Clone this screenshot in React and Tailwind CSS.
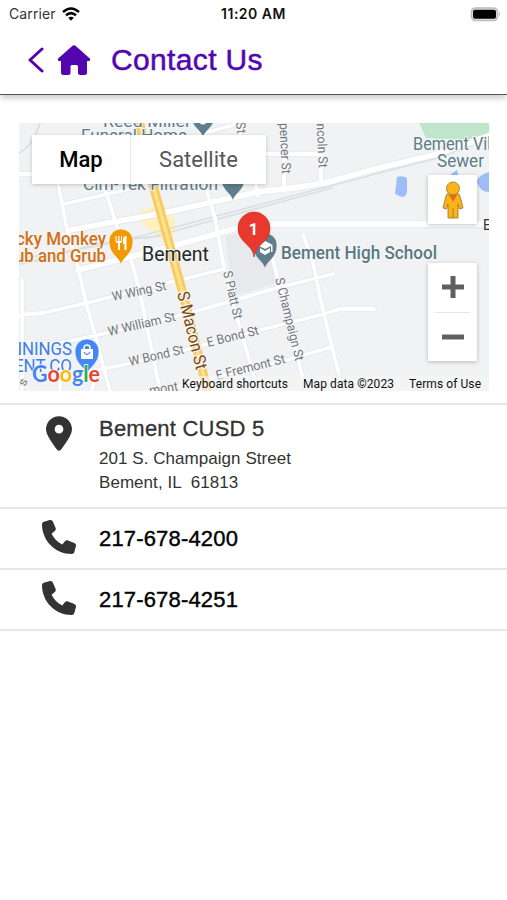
import React from 'react';

const minorRoads = [
  'M19 174H36', 'M58 183L66 225L77 263L86 303L95 335L110 391',
  'M64 204L143 186L210 168', 'M104 187L107 195L117 227L132 263L140 293L160 391',
  'M203 178L208 195L215 218L223 262L232 300L256 384', 'M265 224L273 260L306 391',
  'M303 235L313 262L320 297L332 347L339 374', 'M19 315L43 313L87 303L167 283L224 269',
  'M55 344L107 333L193 312L277 288L333 274', 'M93 371L127 364L185 350L260 330L320 315L340 309H374',
  'M170 388L287 360L331 347', 'M22 280V391', 'M60 363V391', 'M95 370L92 391',
  'M260 154H322', 'M284 123V188', 'M321 123V182', 'M205 133L240 123', 'M255 180L258 196', 'M240 123V140', 'M19 343L54 344',
];
const majorRoads = [
  'M70 230L163 213L208 203L257 192L300 187L325 183L371 170L437 154L489 136',
  'M78 270L110 262L173 246L223 232Q245 225 270 224H489',
];

function Label({ x, y, w, size = 13, fill = '#73777b', rotate = 0, weight = 400, halo = 2, children }) {
  return (
    <text x={x} y={y} textLength={w} lengthAdjust="spacingAndGlyphs" fontSize={size} fontWeight={weight} fill={fill}
      stroke="#f4f6f7" strokeWidth={halo} strokeLinejoin="round" paintOrder="stroke" transform={`rotate(${rotate} ${x} ${y})`}>
      {children}
    </text>
  );
}

function Pin({ x, y, s = 1, fill, children }) {
  return (
    <g transform={`translate(${x} ${y}) scale(${s})`}>
      <path d="M0 19C-2 10-12 9-12-5A12 12 0 0 1 12-5C12 9 2 10 0 19Z" fill={fill} stroke="#fff" strokeWidth=".6" />
      {children}
    </g>
  );
}

function MapDrawing() {
  return (
    <svg viewBox="19 123 470 268" className="block h-full w-full font-[Roboto,sans-serif]" role="img" aria-label="Map of Bement">
      <rect x="19" y="123" width="470" height="268" fill="#f0f2f4" />
      <path d="M225 236L258 230L272 256L275 284L233 296Z" fill="#e7e9ed" />
      <path d="M419 123H489V136L466 140L426 138Z" fill="#bfe5ca" />
      <g fill="#9cbdf8">
        <path d="M397 177Q402 175 407 178V192Q406 197 402 197L395 194Z" />
        <path d="M451 174L457 170L459 178H450Z" />
        <path d="M477 182Q478 175 489 172V192Q480 192 477 182Z" />
      </g>
      <path d="M140 211L158 205L170 209L178 231L164 240L148 228L137 220Z" fill="#fff0bd" />
      <g fill="none" stroke="#dcdee1" strokeWidth="1.8">
        <path d="M19 153Q32 147 40 123M19 258Q80 252 160 231L330 186L437 158L489 139M145 239L332 188" />
        <path d="M19 264L40 260Q100 240 160 236" />
      </g>
      <g fill="none" strokeLinejoin="round" strokeLinecap="round">
        {minorRoads.map((d) => <path key={d} d={d} stroke="#e3e5e8" strokeWidth="5" />)}
        {majorRoads.map((d) => <path key={d} d={d} stroke="#e3e5e8" strokeWidth="7" />)}
        {minorRoads.map((d) => <path key={d} d={d} stroke="#fff" strokeWidth="3.8" />)}
        {majorRoads.map((d) => <path key={d} d={d} stroke="#fff" strokeWidth="5.8" />)}
        <path d="M139 120L153 185L171 250L182 290L208 393" stroke="#f8cb62" strokeWidth="9" />
        <path d="M139 120L153 185L171 250L182 290L208 393" stroke="#ffe18d" strokeWidth="3.2" />
      </g>

      <Label x={103} y={127} w={88} size={17} fill="#5f7d86">Reed Miller</Label>
      <Label x={81} y={141} w={106} size={17} fill="#5f7d86">Funeral Home</Label>
      <Label x={83} y={190} w={135} size={17} fill="#5f7d86">Cim-Tek Filtration</Label>
      <Pin x={203} y={119} fill="#607d8b"><circle cy="2" r="3.5" fill="#fff" /></Pin>
      <Pin x={233} y={182} fill="#607d8b" />

      <Label x={236} y={122} w={12} rotate={85}>St</Label>
      <Label x={279} y={116} w={58} rotate={87}>Spencer St</Label>
      <Label x={316} y={114} w={54} rotate={87}>Lincoln St</Label>
      <Label x={413} y={150} w={91} size={18} fill="#5f7d86">Bement Villa</Label>
      <Label x={437} y={167} w={47} size={18} fill="#5f7d86">Sewer</Label>
      <text x="483" y="230" fontSize="14" fill="#333">E</text>

      <Label x={113} y={301} w={55} rotate={-12}>W Wing St</Label>
      <Label x={109} y={336} w={69} rotate={-13}>W William St</Label>
      <Label x={130} y={366} w={56} rotate={-13}>W Bond St</Label>
      <Label x={208} y={347} w={53} rotate={-14}>E Bond St</Label>
      <Label x={217} y={380} w={71} rotate={-14}>E Fremont St</Label>
      <Label x={150} y={395} w={29} rotate={-9}>mont</Label>
      <Label x={223} y={272} w={49} rotate={77}>S Piatt St</Label>
      <Label x={275} y={279} w={85} rotate={76}>S Champaign St</Label>
      <Label x={25} y={387} w={7} size={12} rotate={-65}>s</Label>
      <Label x={177} y={293} w={80} size={17} rotate={76} weight={400} fill="#7b4a12" halo={2.6}>S Macon St</Label>

      <Label x={16} y={245} w={90} size={18} weight={500} fill="#d27015">cky Monkey</Label>
      <Label x={15} y={262} w={91} size={18} weight={500} fill="#d27015">ub and Grub</Label>
      <Pin x={121} y={246} fill="#f29900">
        <path d="M-5.500-10V-5Q-5.500-3-3-3V4H-1V-3Q1-3 1-5V-10H0V-5H-1.500V-10H-2.700V-5H-4.300V-10ZM2-6Q2-10 5.500-10V4H3.500V-2H2Z" fill="#fff" />
      </Pin>
      <Label x={142} y={261} w={67} size={20} fill="#26282a">Bement</Label>
      <Pin x={265} y={250} fill="#607d8b">
        <path d="M-8-5L0-9L8-5L0-1ZM-5-2L0 1L5-2V2L0 5L-5 2ZM6-4H7.500V2H6Z" fill="#fff" />
      </Pin>
      <Label x={281} y={258.500} w={156} size={18} weight={500} fill="#5a7780">Bement High School</Label>
      <path d="M254 257C253 244 238 243 238 228A16 16 0 0 1 270 228C270 243 255 244 254 257Z" fill="#e9392f" stroke="#c9362e" strokeWidth=".8" />
      <text x="253.500" y="234.500" textAnchor="middle" fontSize="16.500" fontWeight="700" fill="#fff">1</text>

      <Label x={10} y={355} w={62} size={18} fill="#3c7de6">NNINGS</Label>
      <Label x={14} y={372} w={58} size={18} fill="#3c7de6">ENT CO</Label>
      <Pin x={87} y={356} fill="#4387f5">
        <path d="M-6-7H6V3H-6Z" fill="#fff" /><path d="M-3-7V-8A3 3 0 0 1 3-8V-7" fill="none" stroke="#fff" strokeWidth="1.500" />
        <path d="M-3-4Q0 1 3-4" fill="none" stroke="#4387f5" strokeWidth="1.300" />
      </Pin>
      <text x="32" y="382" textLength="68" lengthAdjust="spacingAndGlyphs" fontSize="23" fontWeight="700" paintOrder="stroke" stroke="#fff" strokeWidth="1.500" className="font-[Lato,sans-serif]">
        <tspan fill="#4285f4">G</tspan><tspan fill="#ea4335">o</tspan><tspan fill="#fbbc05">o</tspan><tspan fill="#4285f4">g</tspan><tspan fill="#34a853">l</tspan><tspan fill="#ea4335">e</tspan>
      </text>
      <rect x="179" y="376" width="310" height="15" fill="#f5f5f5" fillOpacity=".65" />
      <g fontSize="12" fill="#111">
        <text x="182" y="388" textLength="106">Keyboard shortcuts</text>
        <text x="303" y="388" textLength="91">Map data ©2023</text>
        <text x="409" y="388" textLength="72">Terms of Use</text>
      </g>
    </svg>
  );
}

function PhoneIcon() {
  return (
    <svg viewBox="0 0 512 512" className="mb-1 h-[34px] w-[34px] fill-[#333]">
      <path d="M164.900 24.600c-7.700-18.600-28-28.500-47.400-23.200l-88 24C12.100 30.200 0 46 0 64c0 247.400 200.600 448 448 448 18 0 33.800-12.100 38.600-29.500l24-88c5.300-19.400-4.600-39.700-23.200-47.400l-96-40c-16.300-6.800-35.200-2.100-46.300 11.600L304.700 368C234.300 334.700 177.300 277.700 144 207.300L193.300 167c13.700-11.200 18.400-30 11.600-46.300l-40-96z" />
    </svg>
  );
}

function PhoneRow({ number }) {
  return (
    <li className="flex h-[61px] items-center border-b-2 border-[#e6e6e6] pl-[42px]">
      <PhoneIcon />
      <a className="ml-[23px] text-[22px] tracking-[0.17px] text-black [-webkit-text-stroke:0.4px]">{number}</a>
    </li>
  );
}

export default function App() {
  return (
    <div className="flex h-[900px] w-[507px] flex-col overflow-hidden bg-white font-['Liberation_Sans',sans-serif]">
      <header className="relative z-10 h-[95px] shrink-0 border-b-[1.5px] border-[#555] bg-white shadow-[0_4px_6px_-1px_rgba(0,0,0,0.22)]">
        <div className="grid h-7 grid-cols-3 items-center pl-[9px] pr-[6px] font-[Inter,sans-serif] text-sm leading-7">
          <div className="flex items-center gap-[6px] text-[#333]">
            <span className="text-[14px] tracking-[0.1px]">Carrier</span>
            <svg viewBox="0 0 18 14" className="h-[14px] w-[18px]" fill="none" stroke="#000" strokeWidth="2.500">
              <path d="M1 5Q9-2 17 5M4 8.300Q9 4 14 8.300" /><path d="M6.200 10.800Q9 8.500 11.800 10.800L9 13.700Z" fill="#000" stroke="none" />
            </svg>
          </div>
          <span className="pr-[3px] text-center text-[14px] font-semibold tracking-[0.5px] text-[#111]">11:20 AM</span>
          <svg viewBox="0 0 31 15" className="h-[15px] w-[31px] justify-self-end">
            <rect x="1.500" y="1" width="26" height="12.500" rx="4" fill="#e6e6e6" stroke="#bbb" strokeWidth="1.600" />
            <rect x="3" y="2.800" width="23" height="9" rx="2" fill="#000" /><path d="M29 5Q31 7 29 9Z" fill="#aaa" />
          </svg>
        </div>
        <div className="flex h-16 items-center pl-7 text-[#5306ae]">
          <svg viewBox="0 0 16 26" className="h-[26px] w-4" fill="none" stroke="currentColor" strokeWidth="3" strokeLinecap="round" strokeLinejoin="round"><path d="M14 2L2 13L14 24" /></svg>
          <svg viewBox="0 0 34 30" className="ml-[13px] h-[30px] w-[34px]" fill="currentColor">
            <path d="M15.500.8Q17-.5 18.500.8L32.800 13.600Q34 15.200 32 16H30V27.500Q30 30 27.500 30H23Q21 30 21 28V21.500Q21 20 19.500 20H15Q13.500 20 13.500 21.500V28Q13.500 30 11.500 30H6.500Q4 30 4 27.500V16H2Q0 15.200 1.200 13.600Z" />
          </svg>
          <h1 className="ml-5 text-[30px] leading-9 tracking-[0.35px] [-webkit-text-stroke:0.5px]">Contact Us</h1>
        </div>
      </header>

      <main>
        <div className="border-b-2 border-[#e6e6e6] pb-[12px] pl-[19px] pr-[18px] pt-7 font-[Roboto,sans-serif]">
          <section className="relative h-[268px] w-[470px] overflow-hidden">
            <MapDrawing />
            <div className="absolute left-[13px] top-3 flex h-[49px] w-[234px] items-center bg-white text-[22px] shadow-[0_1px_4px_rgba(0,0,0,0.2)]">
              <button className="h-full w-[99px] border-r border-[#e8e8e8] font-medium text-black">Map</button>
              <button className="h-full flex-1 text-[#565656]">Satellite</button>
            </div>
            <button className="absolute left-[409px] top-[52px] flex h-[49px] w-[49px] items-center justify-center bg-white shadow-[0_1px_4px_rgba(0,0,0,0.25)]" aria-label="Street view">
              <svg viewBox="0 0 22 38" className="h-[38px] w-[22px]" fill="#fbb416" stroke="#90713a" strokeWidth=".8">
                <path d="M5 13H17Q18 14 21 27L17.500 28L16 23V37H6V23L4.500 28L1 27Q4 14 5 13Z" /><path d="M7 14L11 21L15 14Z" fill="#e56a1d" stroke="none" /><circle cx="11" cy="7.500" r="6.500" /><path d="M11 27V37" />
              </svg>
            </button>
            <div className="absolute left-[409px] top-[140px] flex h-[98px] w-[49px] flex-col items-center bg-white shadow-[0_1px_4px_rgba(0,0,0,0.25)]">
              <button className="flex flex-1 items-center" aria-label="Zoom in"><svg viewBox="0 0 22 22" className="h-[22px] w-[22px]" stroke="#606060" strokeWidth="5"><path d="M0 11H22M11 0V22" /></svg></button>
              <div className="h-px w-[35px] bg-[#e6e6e6]" />
              <button className="flex flex-1 items-center" aria-label="Zoom out"><svg viewBox="0 0 22 22" className="h-[22px] w-[22px]" stroke="#606060" strokeWidth="5"><path d="M0 11H22" /></svg></button>
            </div>
          </section>
        </div>
        <ul>
          <li className="flex h-[104px] border-b-2 border-[#e6e6e6] pl-[46px] pt-[11px] text-[#333]">
            <svg viewBox="0 0 384 512" className="h-[35px] w-[26px] shrink-0" fill="currentColor"><path d="M215.700 499.200C267 435 384 279.400 384 192 384 86 298 0 192 0S0 86 0 192c0 87.400 117 243 168.300 307.200 12.300 15.300 35.100 15.300 47.400 0zM192 128a64 64 0 1 1 0 128 64 64 0 1 1 0-128z" /></svg>
            <div className="ml-[27px]">
              <h2 className="text-[22px] leading-[26px] tracking-[0.22px] [-webkit-text-stroke:0.3px]">Bement CUSD 5</h2>
              <p className="whitespace-pre pt-[5px] text-[17px] leading-6 tracking-[0.05px]">{'201 S. Champaign Street\nBement, IL  61813'}</p>
            </div>
          </li>
          <PhoneRow number="217-678-4200" />
          <PhoneRow number="217-678-4251" />
        </ul>
      </main>
    </div>
  );
}
